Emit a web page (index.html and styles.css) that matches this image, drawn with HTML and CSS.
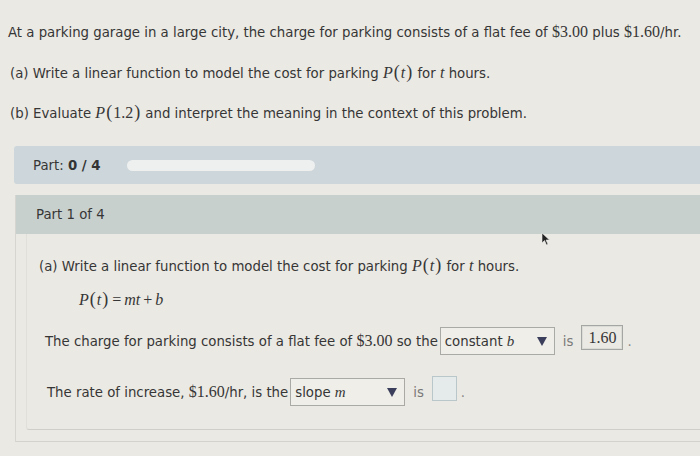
FILE: index.html
```html
<!DOCTYPE html>
<html>
<head>
<meta charset="utf-8">
<link rel="stylesheet" href="styles.css">
</head>
<body>
<div class="page">
  <p class="q first">At a parking garage in a large city, the charge for parking consists of a flat fee of <span class="m">$3.00</span> plus <span class="m">$1.60</span>/hr.</p>
  <p class="q sub">(a) Write a linear function to model the cost for parking <span class="m"><i>P</i><span class="paren">(</span><i>t</i><span class="paren">)</span></span> for <span class="m"><i>t</i></span> hours.</p>
  <p class="q sub">(b) Evaluate <span class="m"><i>P</i><span class="paren">(</span>1.2<span class="paren">)</span></span> and interpret the meaning in the context of this problem.</p>

  <div class="partbar">
    <span class="partlabel">Part: <b>0 / 4</b></span>
    <div class="progress"></div>
  </div>

  <div class="card">
    <div class="card-head">Part 1 of 4</div>
    <div class="card-body">
      <div class="inner">
        <p class="q">(a) Write a linear function to model the cost for parking <span class="m"><i>P</i><span class="paren">(</span><i>t</i><span class="paren">)</span></span> for <span class="m"><i>t</i></span> hours.</p>
        <p class="eq"><i>P</i><span class="paren">(</span><i>t</i><span class="paren">)</span><span class="op">=</span><i>mt</i><span class="op">+</span><i>b</i></p>
        <div class="row">
          <span>The charge for parking consists of a flat fee of <span class="m">$3.00</span> so the</span>
          <span class="select"><span>constant <i class="mv">b</i></span><span class="tri"></span></span>
          <span class="is">is</span>
          <span class="input filled">1.60</span>
          <span class="dot">.</span>
        </div>
        <div class="row second">
          <span>The rate of increase, <span class="m">$1.60</span>/hr, is the</span>
          <span class="select"><span>slope <i class="mv">m</i></span><span class="tri"></span></span>
          <span class="is">is</span>
          <span class="input empty"></span>
          <span class="dot">.</span>
        </div>
      </div>
    </div>
  </div>
</div>
<svg class="cursor" width="10" height="14" viewBox="0 0 10 14"><path d="M1 1 L1 11 L3.5 8.5 L5.5 13 L7 12.3 L5 8 L8.5 8 Z" fill="#222" stroke="#eee" stroke-width="0.6"/></svg>
</body>
</html>
```

FILE: styles.css
```css
html, body {
  margin: 0;
  padding: 0;
}
body {
  position: relative;
  background: #ebe9e3;
  font-family: "DejaVu Sans", Verdana, sans-serif;
  font-size: 13.3px;
  color: #363636;
  width: 700px;
  height: 456px;
  overflow: hidden;
}
.page {
  padding-top: 23px;
}
.q {
  margin: 0;
  height: 20px;
  line-height: 20px;
  white-space: nowrap;
}
.first {
  padding-left: 8px;
}
.sub {
  padding-left: 10px;
  margin-top: 20px;
}
.m {
  font-family: "Liberation Serif", "Times New Roman", serif;
  font-size: 16px;
  line-height: 1;
}
.paren {
  font-size: 18px;
  line-height: 1;
  margin: 0 1px;
}
.partbar {
  margin: 23px 0 0 14px;
  height: 38px;
  background: #cdd6da;
  border-radius: 3px 0 0 3px;
  display: flex;
  align-items: center;
  padding-left: 19px;
  gap: 26px;
}
.partlabel b {
  font-weight: bold;
  color: #333;
}
.progress {
  width: 188px;
  height: 11px;
  border-radius: 6px;
  background: #eef0ef;
}
.card {
  margin: 11px 0 0 15px;
  border-left: 1px solid #d6d5cf;
}
.card-head {
  height: 39px;
  background: #c8d0ce;
  display: flex;
  align-items: center;
  padding-left: 20px;
}
.card-body {
  padding: 0 0 11px 10px;
  border-bottom: 1px solid #d3d2cc;
}
.inner {
  border-left: 1px solid #e0dfd9;
  border-bottom: 1px solid #cfcec8;
  border-radius: 0 0 0 3px;
  padding: 22px 0 22px 12px;
}
.eq {
  margin: 14px 0 0 40px;
  height: 20px;
  line-height: 20px;
  font-family: "Liberation Serif", "Times New Roman", serif;
  font-size: 16px;
}
.op {
  margin: 0 3px;
}
.row {
  display: flex;
  align-items: center;
  height: 30px;
  margin-top: 16px;
  padding-left: 6px;
  white-space: nowrap;
}
.row.second {
  margin-top: 21px;
  padding-left: 8px;
}
.select {
  margin-left: 2px;
  border: 1px solid #a9a9a6;
  background: #efeee9;
  display: flex;
  align-items: center;
  justify-content: space-between;
  padding: 0 7px 0 4px;
  box-sizing: border-box;
  width: 115px;
  height: 28px;
}
.mv {
  font-family: "Liberation Serif", "Times New Roman", serif;
  font-size: 15px;
}
.tri {
  width: 0;
  height: 0;
  border-left: 5px solid transparent;
  border-right: 5px solid transparent;
  border-top: 9px solid #3b3f5c;
}
.is {
  color: #7a7a7a;
  margin-left: 8px;
}
.input {
  box-sizing: border-box;
  margin-left: 8px;
  height: 25px;
  margin-bottom: 7px;
  display: flex;
  align-items: center;
  justify-content: center;
}
.input.filled {
  width: 42px;
  border: 1px solid #a4a6a3;
  box-shadow: inset 0 0 0 1px #dcdcd6;
  font-family: "Liberation Serif", "Times New Roman", serif;
  font-size: 16px;
}
.input.empty {
  width: 25px;
  border: 1px solid #b9c7ca;
  background: #e5ebea;
}
.dot {
  margin-left: 4px;
  color: #888;
}
.cursor {
  position: absolute;
  left: 541px;
  top: 232px;
}
```
